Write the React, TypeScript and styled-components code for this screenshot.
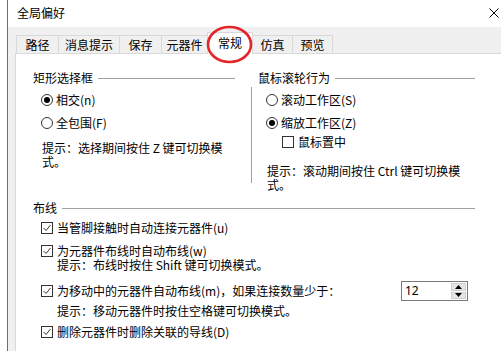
import React from 'react';
import styled, { createGlobalStyle } from 'styled-components';

const Global = createGlobalStyle`
  html, body { margin: 0; padding: 0; background: #fff; }
  body {
    font-family: "Noto Sans CJK SC", "Noto Sans", sans-serif;
    font-size: 12px;
    color: #000;
  }
  #root { width: 501px; height: 351px; overflow: hidden; }
  * { box-sizing: border-box; }
`;

const Window = styled.div`
  margin-left: 7px;
  height: 351px;
  border-left: 1px solid #6e6e6e;
  display: flex;
  flex-direction: column;
  overflow: hidden;
`;

const TitleBar = styled.div`
  height: 27px;
  flex: none;
  background: #fff;
  display: flex;
  align-items: center;
  justify-content: space-between;
  padding: 0 2px 2px 9px;
  line-height: 14px;
`;

const Body = styled.div`
  flex: 1;
  background: #f0f0f0;
  padding-left: 7px;
  display: flex;
  flex-direction: column;
`;

const TabStrip = styled.div`
  height: 26px;
  flex: none;
  display: flex;
  align-items: flex-end;
  padding-left: 1px;
  position: relative;
  z-index: 2;
`;

const Tab = styled.div<{ $w: number; $active?: boolean }>`
  position: relative;
  width: ${(p) => p.$w}px;
  height: ${(p) => (p.$active ? 22 : 18)}px;
  margin-bottom: ${(p) => (p.$active ? -1 : 0)}px;
  margin-left: -1px;
  &:first-child { margin-left: 0; }
  border: 1px solid #d9d9d9;
  border-bottom: none;
  background: ${(p) => (p.$active ? '#fff' : '#f0f0f0')};
  z-index: ${(p) => (p.$active ? 2 : 1)};
  display: flex;
  align-items: center;
  justify-content: center;
  line-height: 14px;
  padding-bottom: ${(p) => (p.$active ? 2 : 0)}px;
`;

const Highlight = styled.svg`
  position: absolute;
  left: -2px;
  top: -8px;
  width: 47px;
  height: 39px;
  overflow: visible;
  pointer-events: none;
`;

const Panel = styled.div`
  flex: 1;
  background: #fff;
  border-top: 1px solid #d9d9d9;
  border-left: 1px solid #d9d9d9;
  padding: 17px 26px 0 0;
  line-height: 14px;
`;

const TopRow = styled.div`
  display: grid;
  grid-template-columns: 235px 1fr;
`;

const LeftCol = styled.div`
  padding: 0 16px 0 17px;
`;

const RightCol = styled.div``;

const GroupHeader = styled.div<{ $indent?: number }>`
  display: flex;
  align-items: center;
  height: 14px;
  gap: 5px;
  padding-left: ${(p) => p.$indent ?? 0}px;
`;

const Rule = styled.div`
  flex: 1;
  height: 1px;
  background: #a0a0a0;
`;

const RightBody = styled.div`
  margin-top: 2px;
  height: 96px;
  border-left: 1px solid #a0a0a0;
  padding: 1px 0 0 14px;
`;

const Options = styled.div<{ $mt?: number }>`
  margin-left: 8px;
  margin-top: ${(p) => p.$mt ?? 0}px;
`;

const RadioRow = styled.div`
  display: flex;
  align-items: center;
  height: 23px;
`;

const RadioCircle = styled.span<{ $on?: boolean }>`
  width: 12px;
  height: 12px;
  border: 1px solid #333;
  border-radius: 50%;
  display: flex;
  align-items: center;
  justify-content: center;
  margin-right: 3px;
  flex: none;
  &::after {
    content: '';
    width: 6px;
    height: 6px;
    border-radius: 50%;
    background: ${(p) => (p.$on ? '#000' : 'transparent')};
  }
`;

const CheckRow = styled.div<{ $mt?: number; $h?: number; $ml?: number }>`
  display: flex;
  align-items: center;
  height: ${(p) => p.$h ?? 14}px;
  margin-top: ${(p) => p.$mt ?? 0}px;
  margin-left: ${(p) => p.$ml ?? 0}px;
`;

const Box = styled.span`
  width: 12px;
  height: 12px;
  border: 1px solid #333;
  margin-right: 4px;
  flex: none;
  display: flex;
  align-items: center;
  justify-content: center;
  background: #fff;
`;

const Hint = styled.div<{ $mt?: number; $ml?: number; $max?: number }>`
  margin-top: ${(p) => p.$mt ?? 0}px;
  margin-left: ${(p) => p.$ml ?? 0}px;
  max-width: ${(p) => (p.$max ? `${p.$max}px` : 'none')};
  line-height: 14px;
`;

const Bottom = styled.div`
  margin-top: 18px;
  padding-left: 17px;
`;

const SpinBox = styled.div`
  margin-left: auto;
  margin-right: 7px;
  width: 67px;
  height: 20px;
  border: 1px solid #7a7a7a;
  display: flex;
  background: #fff;
`;

const SpinValue = styled.div`
  flex: 1;
  padding-left: 3px;
  display: flex;
  align-items: center;
  font-family: "Noto Sans", sans-serif;
  font-size: 12px;
`;

const SpinButtons = styled.div`
  width: 16px;
  display: flex;
  flex-direction: column;
  padding: 1px 1px 1px 0;
  gap: 1px;
`;

const SpinBtn = styled.div`
  flex: 1;
  background: #e5e5e5;
  border: 1px solid #cfcfcf;
  display: flex;
  align-items: center;
  justify-content: center;
`;

const Check = () => (
  <svg width="10" height="10" viewBox="0 0 10 10">
    <path d="M1.5 5 L4 7.5 L8.5 2" fill="none" stroke="#333" strokeWidth="1" />
  </svg>
);

const CheckBox: React.FC<{ checked?: boolean }> = ({ checked }) => <Box>{checked && <Check />}</Box>;

const tabs = [
  { label: '路径', w: 43 },
  { label: '消息提示', w: 62 },
  { label: '保存', w: 43 },
  { label: '元器件', w: 47 },
  { label: '常规', w: 46, active: true },
  { label: '仿真', w: 41 },
  { label: '预览', w: 41 },
];

export default function App() {
  return (
    <>
      <Global />
      <Window>
        <TitleBar>
          <span>全局偏好</span>
          <svg width="10" height="10" viewBox="0 0 10 10">
            <path d="M0.5 0.5 L9.5 9.5 M9.5 0.5 L0.5 9.5" stroke="#000" strokeWidth="1" />
          </svg>
        </TitleBar>
        <Body>
          <TabStrip>
            {tabs.map((t) => (
              <Tab key={t.label} $w={t.w} $active={t.active}>
                {t.label}
                {t.active && (
                  <Highlight viewBox="0 0 47 39">
                    <ellipse cx="23.5" cy="19.5" rx="21.5" ry="17.5" fill="none" stroke="#e3262b" strokeWidth="2.6" />
                  </Highlight>
                )}
              </Tab>
            ))}
          </TabStrip>
          <Panel>
            <TopRow>
              <LeftCol>
                <GroupHeader>
                  <span>矩形选择框</span>
                  <Rule />
                </GroupHeader>
                <Options $mt={3}>
                  <RadioRow>
                    <RadioCircle $on />
                    相交(n)
                  </RadioRow>
                  <RadioRow>
                    <RadioCircle />
                    全包围(F)
                  </RadioRow>
                  <Hint $mt={7} $ml={1} $max={188}>
                    提示：选择期间按住 Z 键可切换模式。
                  </Hint>
                </Options>
              </LeftCol>
              <RightCol>
                <GroupHeader $indent={7}>
                  <span>鼠标滚轮行为</span>
                  <Rule />
                </GroupHeader>
                <RightBody>
                  <RadioRow>
                    <RadioCircle />
                    滚动工作区(S)
                  </RadioRow>
                  <RadioRow>
                    <RadioCircle $on />
                    缩放工作区(Z)
                  </RadioRow>
                  <CheckRow $h={15} $ml={16}>
                    <CheckBox />
                    鼠标置中
                  </CheckRow>
                  <Hint $mt={15} $ml={1} $max={200}>
                    提示：滚动期间按住 Ctrl 键可切换模式。
                  </Hint>
                </RightBody>
              </RightCol>
            </TopRow>
            <Bottom>
              <GroupHeader>
                <span>布线</span>
                <Rule />
              </GroupHeader>
              <Options>
                <CheckRow $mt={6}>
                  <CheckBox checked />
                  当管脚接触时自动连接元器件(u)
                </CheckRow>
                <CheckRow $mt={9}>
                  <CheckBox checked />
                  为元器件布线时自动布线(w)
                </CheckRow>
                <Hint $ml={16}>提示：布线时按住 Shift 键可切换模式。</Hint>
                <CheckRow $mt={9} $h={20}>
                  <CheckBox checked />
                  为移动中的元器件自动布线(m)，如果连接数量少于：
                  <SpinBox>
                    <SpinValue>12</SpinValue>
                    <SpinButtons>
                      <SpinBtn>
                        <svg width="7" height="4" viewBox="0 0 7 4">
                          <path d="M0 4 L3.5 0 L7 4 Z" fill="#000" />
                        </svg>
                      </SpinBtn>
                      <SpinBtn>
                        <svg width="7" height="4" viewBox="0 0 7 4">
                          <path d="M0 0 L3.5 4 L7 0 Z" fill="#000" />
                        </svg>
                      </SpinBtn>
                    </SpinButtons>
                  </SpinBox>
                </CheckRow>
                <Hint $mt={3} $ml={16}>提示：移动元器件时按住空格键可切换模式。</Hint>
                <CheckRow $mt={7}>
                  <CheckBox checked />
                  删除元器件时删除关联的导线(D)
                </CheckRow>
              </Options>
            </Bottom>
          </Panel>
        </Body>
      </Window>
    </>
  );
}
